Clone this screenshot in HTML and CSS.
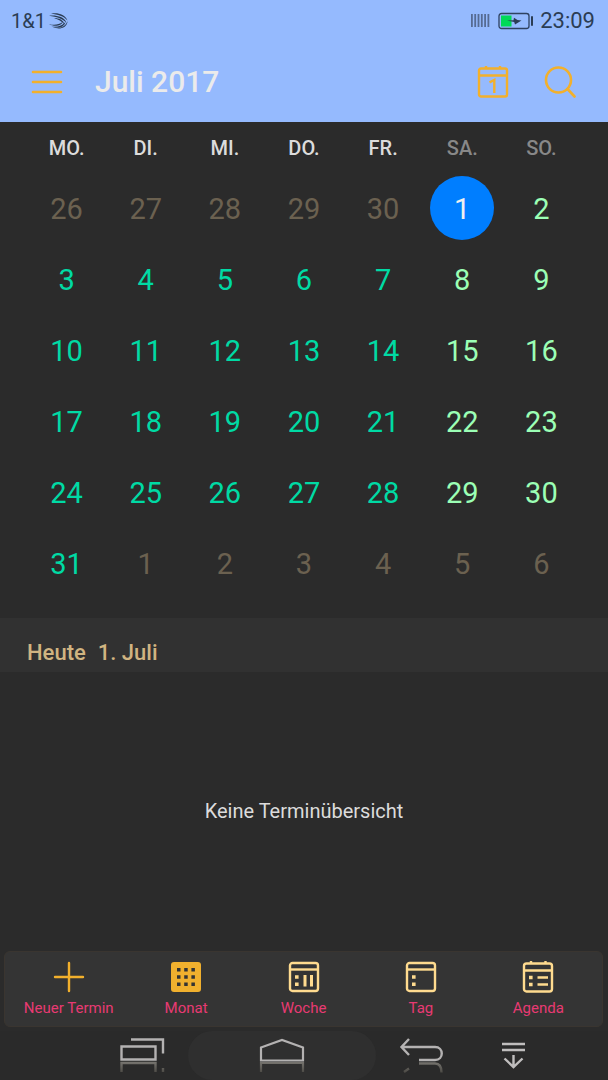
FILE: index.html
```html
<!DOCTYPE html>
<html lang="de">
<head>
    <meta charset="UTF-8">
    <meta name="viewport" content="width=device-width, initial-scale=1.0">
    <title>Juli 2017</title>
    <link rel="stylesheet" href="styles.css">
</head>
<body>
    <header class="top">
        <div class="status">
            <div class="carrier">
                <span>1&amp;1</span>
                <svg width="20" height="16" viewBox="0 0 20 16" fill="#2b3d54">
                    <path d="M3 .8C9-.6 17 1 19.500 7.500 15.500 3 10 1.500 3 .8z"/>
                    <path d="M1 2.800c7-.8 15 .7 17.500 7C14 5.500 9 4 1 2.800z"/>
                    <path d="M6 5c5 0 9.500 2 10.500 6.500C13.500 8 10.500 6.500 6 5z"/>
                    <path d="M1 11.200c5 1 10 .8 13.500-2.200-1 4.500-9 4.500-13.500 2.200z"/>
                    <path d="M3.500 13.500c6 .8 11-.8 14-4.500-1.500 6-9 7-14 4.500z"/>
                    <path d="M8 15.300c5 0 10-2.500 11.500-7.300C19.500 14 13 16.500 8 15.300z"/>
                </svg>
            </div>
            <div class="status-right">
                <svg width="20" height="14" viewBox="0 0 20 14" fill="#566b92">
                    <path d="M1 0h1.800v13H1zM4.300 0h1.800v13H4.300zM7.600 0h1.800v13H7.600zM10.900 0h1.800v13h-1.800zM14.200 0H16v13h-1.800zM17.500 0h1.800v13h-1.800z"/>
                </svg>
                <svg width="36" height="18" viewBox="0 0 36 18">
                    <rect x="1" y="1.500" width="30" height="15" rx="2.500" fill="none" stroke="#2f4260" stroke-width="1.300"/>
                    <rect x="3" y="3.500" width="10.500" height="11" fill="#00d957"/>
                    <path d="M9 8.500l6.500-.3.5-2.500 3.500 2.300 4 .5-6.500 4-.8-2.500z" fill="#2b3d54"/>
                    <rect x="33" y="4" width="2" height="10" rx="1" fill="#2b3d54"/>
                </svg>
                <time class="clock">23:09</time>
            </div>
        </div>
        <div class="appbar">
            <button class="icon-button" type="button" aria-label="Menü">
                <svg width="32" height="32" viewBox="0 0 32 32" fill="none" stroke="#f2b02c" stroke-width="2.600" stroke-linecap="round">
                    <path d="M2 6h28M2 16h28M2 26h28"/>
                </svg>
            </button>
            <h1 class="title">Juli 2017</h1>
            <button class="icon-button" type="button" aria-label="Heute anzeigen">
                <svg width="32" height="34" viewBox="0 0 32 34" fill="none" stroke="#f2b02c" stroke-width="2.400">
                    <rect x="2" y="3.500" width="28" height="28" rx="2"/>
                    <path d="M2 10.500h28M9 1v3M23 1v3"/>
                    <path d="M12.500 17.300l4.800-2.300V28"/>
                </svg>
            </button>
            <button class="icon-button search" type="button" aria-label="Suchen">
                <svg width="32" height="34" viewBox="0 0 32 34" fill="none" stroke="#f2b02c" stroke-width="2.600" stroke-linecap="round">
                    <circle cx="14.500" cy="15" r="12.500"/>
                    <path d="M23.500 24l7 7.500"/>
                </svg>
            </button>
        </div>
    </header>

    <main class="content">
        <table class="month">
            <thead>
                <tr><th>MO.</th><th>DI.</th><th>MI.</th><th>DO.</th><th>FR.</th><th class="weekend">SA.</th><th class="weekend">SO.</th></tr>
            </thead>
            <tbody>
                <tr>
                    <td><button class="day other">26</button></td>
                    <td><button class="day other">27</button></td>
                    <td><button class="day other">28</button></td>
                    <td><button class="day other">29</button></td>
                    <td><button class="day other">30</button></td>
                    <td><button class="day today">1</button></td>
                    <td><button class="day free">2</button></td>
                </tr>
                <tr>
                    <td><button class="day">3</button></td>
                    <td><button class="day">4</button></td>
                    <td><button class="day">5</button></td>
                    <td><button class="day">6</button></td>
                    <td><button class="day">7</button></td>
                    <td><button class="day free">8</button></td>
                    <td><button class="day free">9</button></td>
                </tr>
                <tr>
                    <td><button class="day">10</button></td>
                    <td><button class="day">11</button></td>
                    <td><button class="day">12</button></td>
                    <td><button class="day">13</button></td>
                    <td><button class="day">14</button></td>
                    <td><button class="day free">15</button></td>
                    <td><button class="day free">16</button></td>
                </tr>
                <tr>
                    <td><button class="day">17</button></td>
                    <td><button class="day">18</button></td>
                    <td><button class="day">19</button></td>
                    <td><button class="day">20</button></td>
                    <td><button class="day">21</button></td>
                    <td><button class="day free">22</button></td>
                    <td><button class="day free">23</button></td>
                </tr>
                <tr>
                    <td><button class="day">24</button></td>
                    <td><button class="day">25</button></td>
                    <td><button class="day">26</button></td>
                    <td><button class="day">27</button></td>
                    <td><button class="day">28</button></td>
                    <td><button class="day free">29</button></td>
                    <td><button class="day free">30</button></td>
                </tr>
                <tr>
                    <td><button class="day">31</button></td>
                    <td><button class="day other">1</button></td>
                    <td><button class="day other">2</button></td>
                    <td><button class="day other">3</button></td>
                    <td><button class="day other">4</button></td>
                    <td><button class="day other">5</button></td>
                    <td><button class="day other">6</button></td>
                </tr>
            </tbody>
        </table>

        <h2 class="selected-date"><span>Heute</span><span>1. Juli</span></h2>
        <p class="empty">Keine Terminübersicht</p>
    </main>

    <nav class="toolbar">
        <button class="tool" type="button">
            <svg width="32" height="32" viewBox="0 0 32 32" fill="none" stroke="#f2b02c" stroke-width="2.400" stroke-linecap="round">
                <path d="M16 2v28M2 16h28"/>
            </svg>
            Neuer Termin
        </button>
        <button class="tool" type="button">
            <svg width="32" height="32" viewBox="0 0 32 32">
                <rect x="1" y="1" width="30" height="30" rx="3" fill="#f0b02e"/>
                <path fill="#333" d="M7 7h3.500v3.500H7zM14.200 7h3.500v3.500h-3.500zM21.400 7h3.500v3.500h-3.500zM7 14.200h3.500v3.500H7zM14.200 14.200h3.500v3.500h-3.500zM21.400 14.200h3.500v3.500h-3.500zM7 21.400h3.500v3.500H7zM14.200 21.400h3.500v3.500h-3.500zM21.400 21.400h3.500v3.500h-3.500z"/>
            </svg>
            Monat
        </button>
        <button class="tool" type="button">
            <svg width="32" height="32" viewBox="0 0 32 32" fill="none" stroke="#ffdb8f" stroke-width="2.400">
                <rect x="2" y="2" width="28" height="28" rx="2.500"/>
                <path d="M2 8.500h28"/>
                <path stroke-width="3" d="M17 14v11.500M23.500 14v11.500"/>
                <path stroke="none" fill="#ffdb8f" d="M7 14.200h3.600v3.600H7zM7 21.400h3.600V25H7z"/>
            </svg>
            Woche
        </button>
        <button class="tool" type="button">
            <svg width="32" height="32" viewBox="0 0 32 32" fill="none" stroke="#ffdb8f" stroke-width="2.400">
                <rect x="2" y="2" width="28" height="28" rx="2.500"/>
                <path d="M2 8.500h28"/>
                <path stroke="none" fill="#ffdb8f" d="M7 14.200h3.600v3.600H7zM7 21.400h3.600V25H7z"/>
            </svg>
            Tag
        </button>
        <button class="tool" type="button">
            <svg width="32" height="32" viewBox="0 0 32 32" fill="none" stroke="#ffdb8f" stroke-width="2.400">
                <rect x="2" y="2.500" width="28" height="28" rx="2.500"/>
                <path d="M2 9.500h28M9 0v3M23.500 0v3M15.500 16.500H26M15.500 23.500H26"/>
                <path stroke="none" fill="#ffdb8f" d="M7 14.700h3.600v3.600H7zM7 21.700h3.600v3.600H7z"/>
            </svg>
            Agenda
        </button>
    </nav>

    <nav class="system">
        <button class="key recents" type="button" aria-label="Letzte Apps">
            <svg width="46" height="38" viewBox="0 0 46 38" fill="none" stroke="#b4b2b2" stroke-width="2.400">
                <path d="M2.500 9.500h34v13h-34zM12 2.500h32v14"/>
                <path d="M2.500 35V26h34v9M44 35v-4" stroke="url(#fade)"/>
                <defs>
                    <linearGradient id="fade" gradientUnits="userSpaceOnUse" x1="0" y1="25" x2="0" y2="37">
                        <stop offset="0" stop-color="#76746f"/>
                        <stop offset="1" stop-color="#46443f"/>
                    </linearGradient>
                </defs>
            </svg>
        </button>
        <button class="key home" type="button" aria-label="Startbildschirm">
            <svg width="46" height="38" viewBox="0 0 46 38" fill="none" stroke="#b4b2b2" stroke-width="2.200">
                <path d="M2 10.500L23 3l21 7.500v13H2z"/>
                <path d="M2 35V26h42v9" stroke="url(#fade)"/>
            </svg>
        </button>
        <button class="key back" type="button" aria-label="Zurück">
            <svg width="46" height="38" viewBox="0 0 46 38" fill="none" stroke="#b4b2b2" stroke-width="2.400">
                <path d="M10 2L2.500 10l7.500 8M2.500 10H36c9 0 9 13 0 13H20"/>
                <path d="M20 26.500h16c4 0 6.500 3 6.500 9M5 35l5-3.500" stroke="url(#fade)"/>
            </svg>
        </button>
        <button class="key hide" type="button" aria-label="Leiste ausblenden">
            <svg width="26" height="30" viewBox="0 0 26 30" fill="none" stroke="#c0bebe" stroke-width="2.400">
                <path d="M1 3h23M1 9h23M12.500 14v12M3.500 17.500l9 8.500 9-8.500"/>
            </svg>
        </button>
    </nav>
</body>
</html>
```
FILE: styles.css
```css
* {
    box-sizing: border-box;
}
body {
    margin: 0;
    min-height: 100vh;
    display: flex;
    flex-direction: column;
    background-color: #2b2b2b;
    color: #dcdcdc;
    font-family: Roboto, "Liberation Sans", sans-serif;
}
button {
    padding: 0;
    border: none;
    background: none;
    font-family: inherit;
    cursor: pointer;
}
svg {
    display: block;
}

/* Status bar and app bar */
.top {
    background-color: #95bafe;
}
.status {
    display: flex;
    justify-content: space-between;
    align-items: center;
    height: 41px;
    padding: 0 13px 0 11px;
    color: #2b3d54;
    font-size: 20px;
}
.carrier, .status-right {
    display: flex;
    align-items: center;
}
.carrier {
    gap: 2px;
}
.status-right {
    gap: 8px;
}
.clock {
    margin-left: -2px;
    font-size: 22px;
}
.appbar {
    display: flex;
    align-items: center;
    height: 81px;
    padding: 0 32px 0 31px;
}
.title {
    flex: 1;
    margin: 0 0 0 32px;
    color: #ebebeb;
    font-size: 30px;
    font-weight: 500;
}
.search {
    margin-left: 35px;
}

/* Month */
.content {
    flex: 1;
    display: flex;
    flex-direction: column;
}
.month {
    margin: 0 27px 20px;
    table-layout: fixed;
    border-collapse: collapse;
}
.month th {
    height: 50px;
    padding: 2px 0 0;
    font-size: 20px;
    font-weight: 500;
}
.month .weekend {
    color: #888;
}
.month td {
    height: 71px;
    padding: 0;
    text-align: center;
}
.day {
    width: 64px;
    height: 64px;
    padding-top: 2px;
    border-radius: 50%;
    color: #00daa4;
    font-size: 29px;
}
.day.other {
    color: #6b6150;
}
.day.free {
    color: #9bffb5;
}
.day.today {
    background-color: #007eff;
    color: #f0f0f0;
}

/* Selected day */
.selected-date {
    display: flex;
    gap: 12px;
    margin: 0;
    padding: 22px 27px 6px;
    background-color: #313131;
    color: #d0b481;
    font-size: 22px;
    font-weight: 500;
    line-height: 26px;
}
.empty {
    flex: 1;
    display: flex;
    align-items: center;
    justify-content: center;
    margin: 0;
    padding-bottom: 2px;
    font-size: 20px;
}

/* Bottom bars */
.toolbar {
    display: flex;
    margin: 0 5px 4px 4px;
    padding: 9px 5px 8px;
    border: 1px solid #3a3530;
    border-radius: 6px;
    background-color: #343434;
}
.tool {
    flex: 1;
    display: flex;
    flex-direction: column;
    align-items: center;
    gap: 5px;
    color: #e83a73;
    font-size: 15px;
    line-height: 20px;
}
.system {
    display: grid;
    grid-template-columns: 95fr 93fr 188fr 91fr 93fr 48fr;
    height: 49px;
    background-color: #2a2a2a;
}
.key {
    display: flex;
    align-items: center;
    justify-content: center;
}
.recents {
    grid-column: 2;
}
.home {
    border-radius: 25px;
    background-color: #2f2f2f;
}
```
